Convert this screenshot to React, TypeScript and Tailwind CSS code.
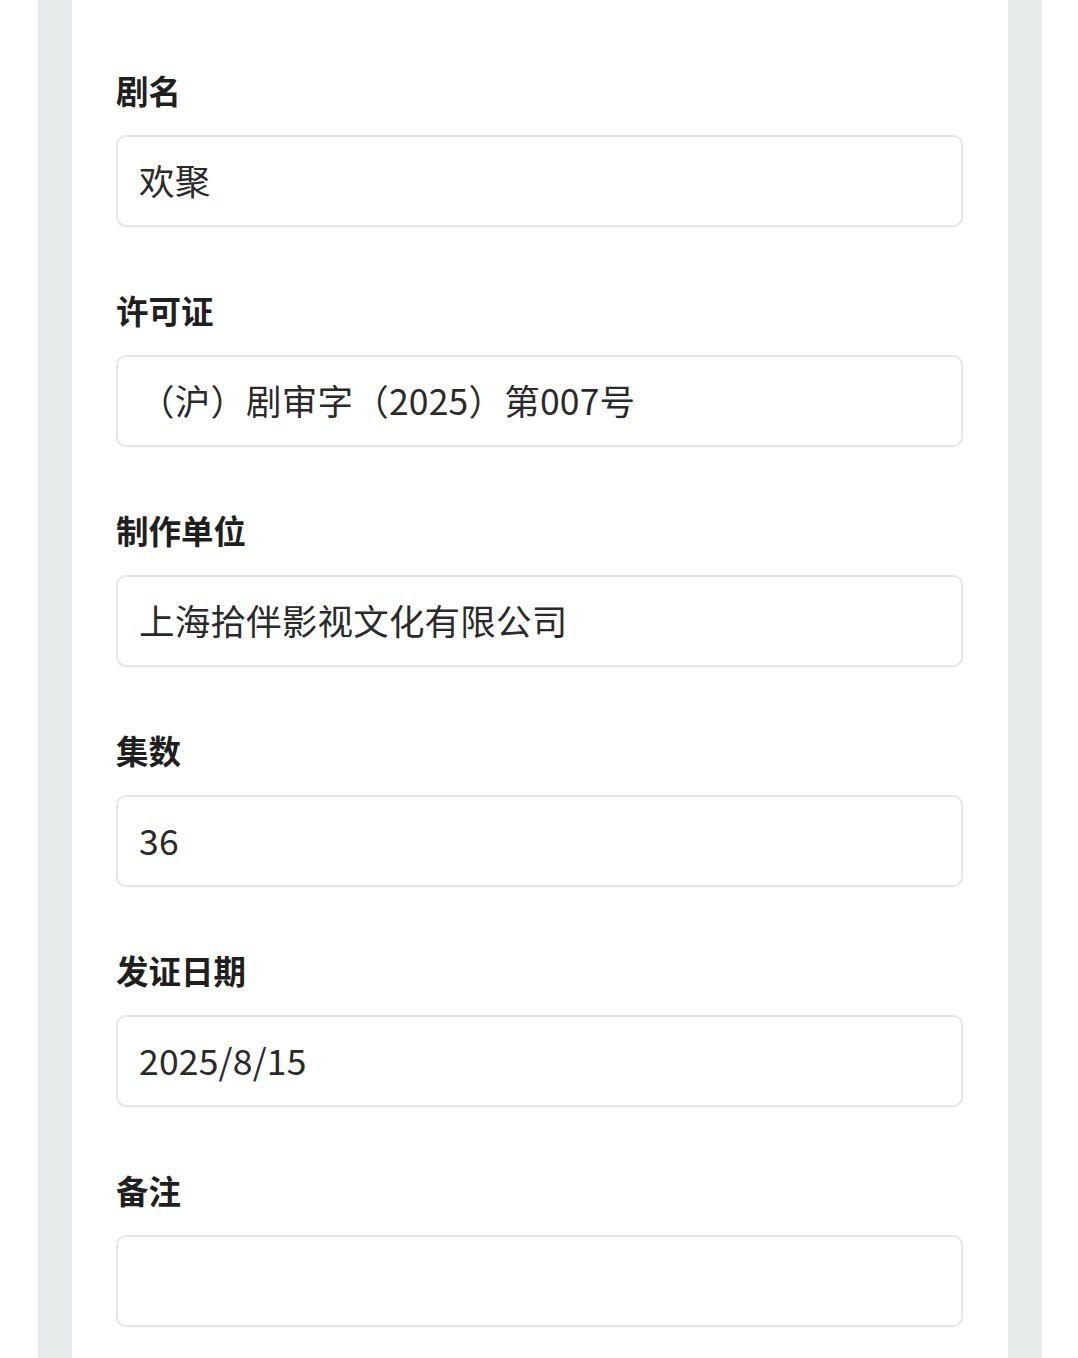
import React from "react";

const fields = [
  { label: "剧名", value: "欢聚" },
  { label: "许可证", value: "（沪）剧审字（2025）第007号" },
  { label: "制作单位", value: "上海拾伴影视文化有限公司" },
  { label: "集数", value: "36" },
  { label: "发证日期", value: "2025/8/15" },
  { label: "备注", value: "" },
];

export default function App() {
  return (
    <div
      className="min-h-[1358px] bg-white pl-[38px] pr-[36px]"
      style={{ fontFamily: '"Noto Sans CJK SC", "Noto Sans", sans-serif' }}
    >
      <div className="min-h-[1358px] bg-[#e7ebeb] px-[34px]">
        <div className="min-h-[1358px] bg-white pl-[44px] pr-[45px] pt-[68px]">
          {fields.map((f) => (
            <div key={f.label} className="mb-[61px] flex flex-col">
              <div className="h-[44px] text-[32.5px] font-bold leading-[44px] text-[#1f1f1f]">
                {f.label}
              </div>
              <div className="mt-[23px] flex h-[92px] items-center rounded-[10px] border-2 border-[#e6e6e6] bg-white pb-[2px] pl-[21px] text-[35.5px] tracking-[0.2px] text-[#2a2a2a] shadow-[0_1px_2px_rgba(0,0,0,0.04)]">
                {f.value}
              </div>
            </div>
          ))}
        </div>
      </div>
    </div>
  );
}
